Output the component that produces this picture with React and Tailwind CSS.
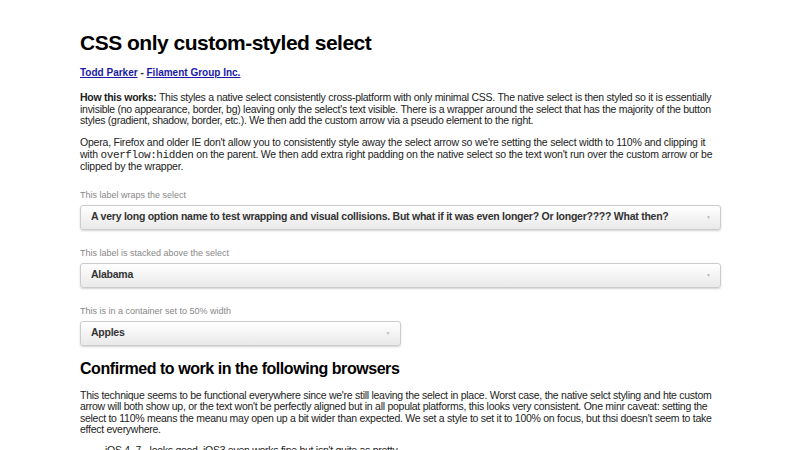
import React from 'react';

const states = ['Alabama', 'Alaska', 'Arizona', 'Arkansas', 'California'];
const fruits = ['Apples', 'Bananas', 'Grapes', 'Oranges'];

// Wrapper carries the button styles, the select itself is invisible
const CustomSelect = ({ options, className = '' }) => (
    <div className={`relative h-[25px] overflow-hidden rounded-[3px] border border-[#ccc] bg-gradient-to-b from-white to-[#e9e9e9] shadow-[0_1px_2px_rgba(0,0,0,0.18)] ${className}`}>
        <select className="block h-[23px] w-[110%] appearance-none border-0 bg-transparent pl-[10px] pr-8 text-[10.5px] font-bold tracking-[-0.25px] text-[#333] outline-none">
            {options.map((o) => (
                <option key={o}>{o}</option>
            ))}
        </select>
        <span className="pointer-events-none absolute right-[9px] top-[9px] text-[5px] leading-none text-[#bbb]">▼</span>
    </div>
);

export default function App() {
    return (
        <div className="min-h-screen bg-white font-['Liberation_Sans',Arial,sans-serif] text-[#222]">
            <div className="ml-[80px] w-[641px] pt-[29px]">
                <h1 className="text-[21px] font-bold leading-[28px] tracking-[-0.5px] text-black">CSS only custom-styled select</h1>

                <p className="mt-[9px] text-[10px] font-bold leading-[14px]">
                    <a href="#" className="text-[#1a1aa6] underline">Todd Parker</a> - <a href="#" className="text-[#1a1aa6] underline">Filament Group Inc.</a>
                </p>

                <p className="mt-[12px] text-[10.5px] leading-[11.5px] tracking-[-0.27px]">
                    <strong>How this works:</strong> This styles a native select consistently cross-platform with only minimal CSS. The native select is then styled so it is essentially invisible (no appearance, border, bg) leaving only the select's text visible. There is a wrapper around the select that has the majority of the button styles (gradient, shadow, border, etc.). We then add the custom arrow via a pseudo element to the right.
                </p>

                <p className="mt-[10.5px] text-[10.5px] leading-[11.5px] tracking-[-0.21px]">
                    Opera, Firefox and older IE don't allow you to consistently style away the select arrow so we're setting the select width to 110% and clipping it with <code className="font-['Liberation_Mono',monospace] text-[11px] tracking-[-0.4px]">overflow:hidden</code> on the parent. We then add extra right padding on the native select so the text won't run over the custom arrow or be clipped by the wrapper.
                </p>

                <label className="mt-[16px] block">
                    <span className="block text-[9px] leading-[12px] text-[#888]">This label wraps the select</span>
                    <CustomSelect className="mt-[4px]" options={["A very long option name to test wrapping and visual collisions. But what if it was even longer? Or longer???? What then?"]} />
                </label>

                <label className="mt-[17px] block text-[9px] leading-[12px] text-[#888]">This label is stacked above the select</label>
                <CustomSelect className="mt-[4px]" options={states} />

                <label className="mt-[17px] block text-[9px] leading-[12px] text-[#888]">This is in a container set to 50% width</label>
                <div className="w-1/2">
                    <CustomSelect className="mt-[4px]" options={fruits} />
                </div>

                <h2 className="mt-[12px] text-[16px] font-bold leading-[22px] tracking-[-0.45px] text-black">Confirmed to work in the following browsers</h2>

                <p className="mt-[10px] text-[10.5px] leading-[11.5px] tracking-[-0.27px]">
                    This technique seems to be functional everywhere since we're still leaving the select in place. Worst case, the native selct styling and hte custom arrow will both show up, or the text won't be perfectly aligned but in all populat platforms, this looks very consistent. One minr caveat: setting the select to 110% means the meanu may open up a bit wider than expected. We set a style to set it to 100% on focus, but thsi doesn't seem to take effect everywhere.
                </p>

                <ul className="mt-[9px] list-disc pl-[25px] text-[10.5px] leading-[11.5px] tracking-[-0.27px]">
                    <li>iOS 4–7 - looks good, iOS3 even works fine but isn't quite as pretty</li>
                    <li>Android 2.3+ - looks good</li>
                </ul>
            </div>
        </div>
    );
}
